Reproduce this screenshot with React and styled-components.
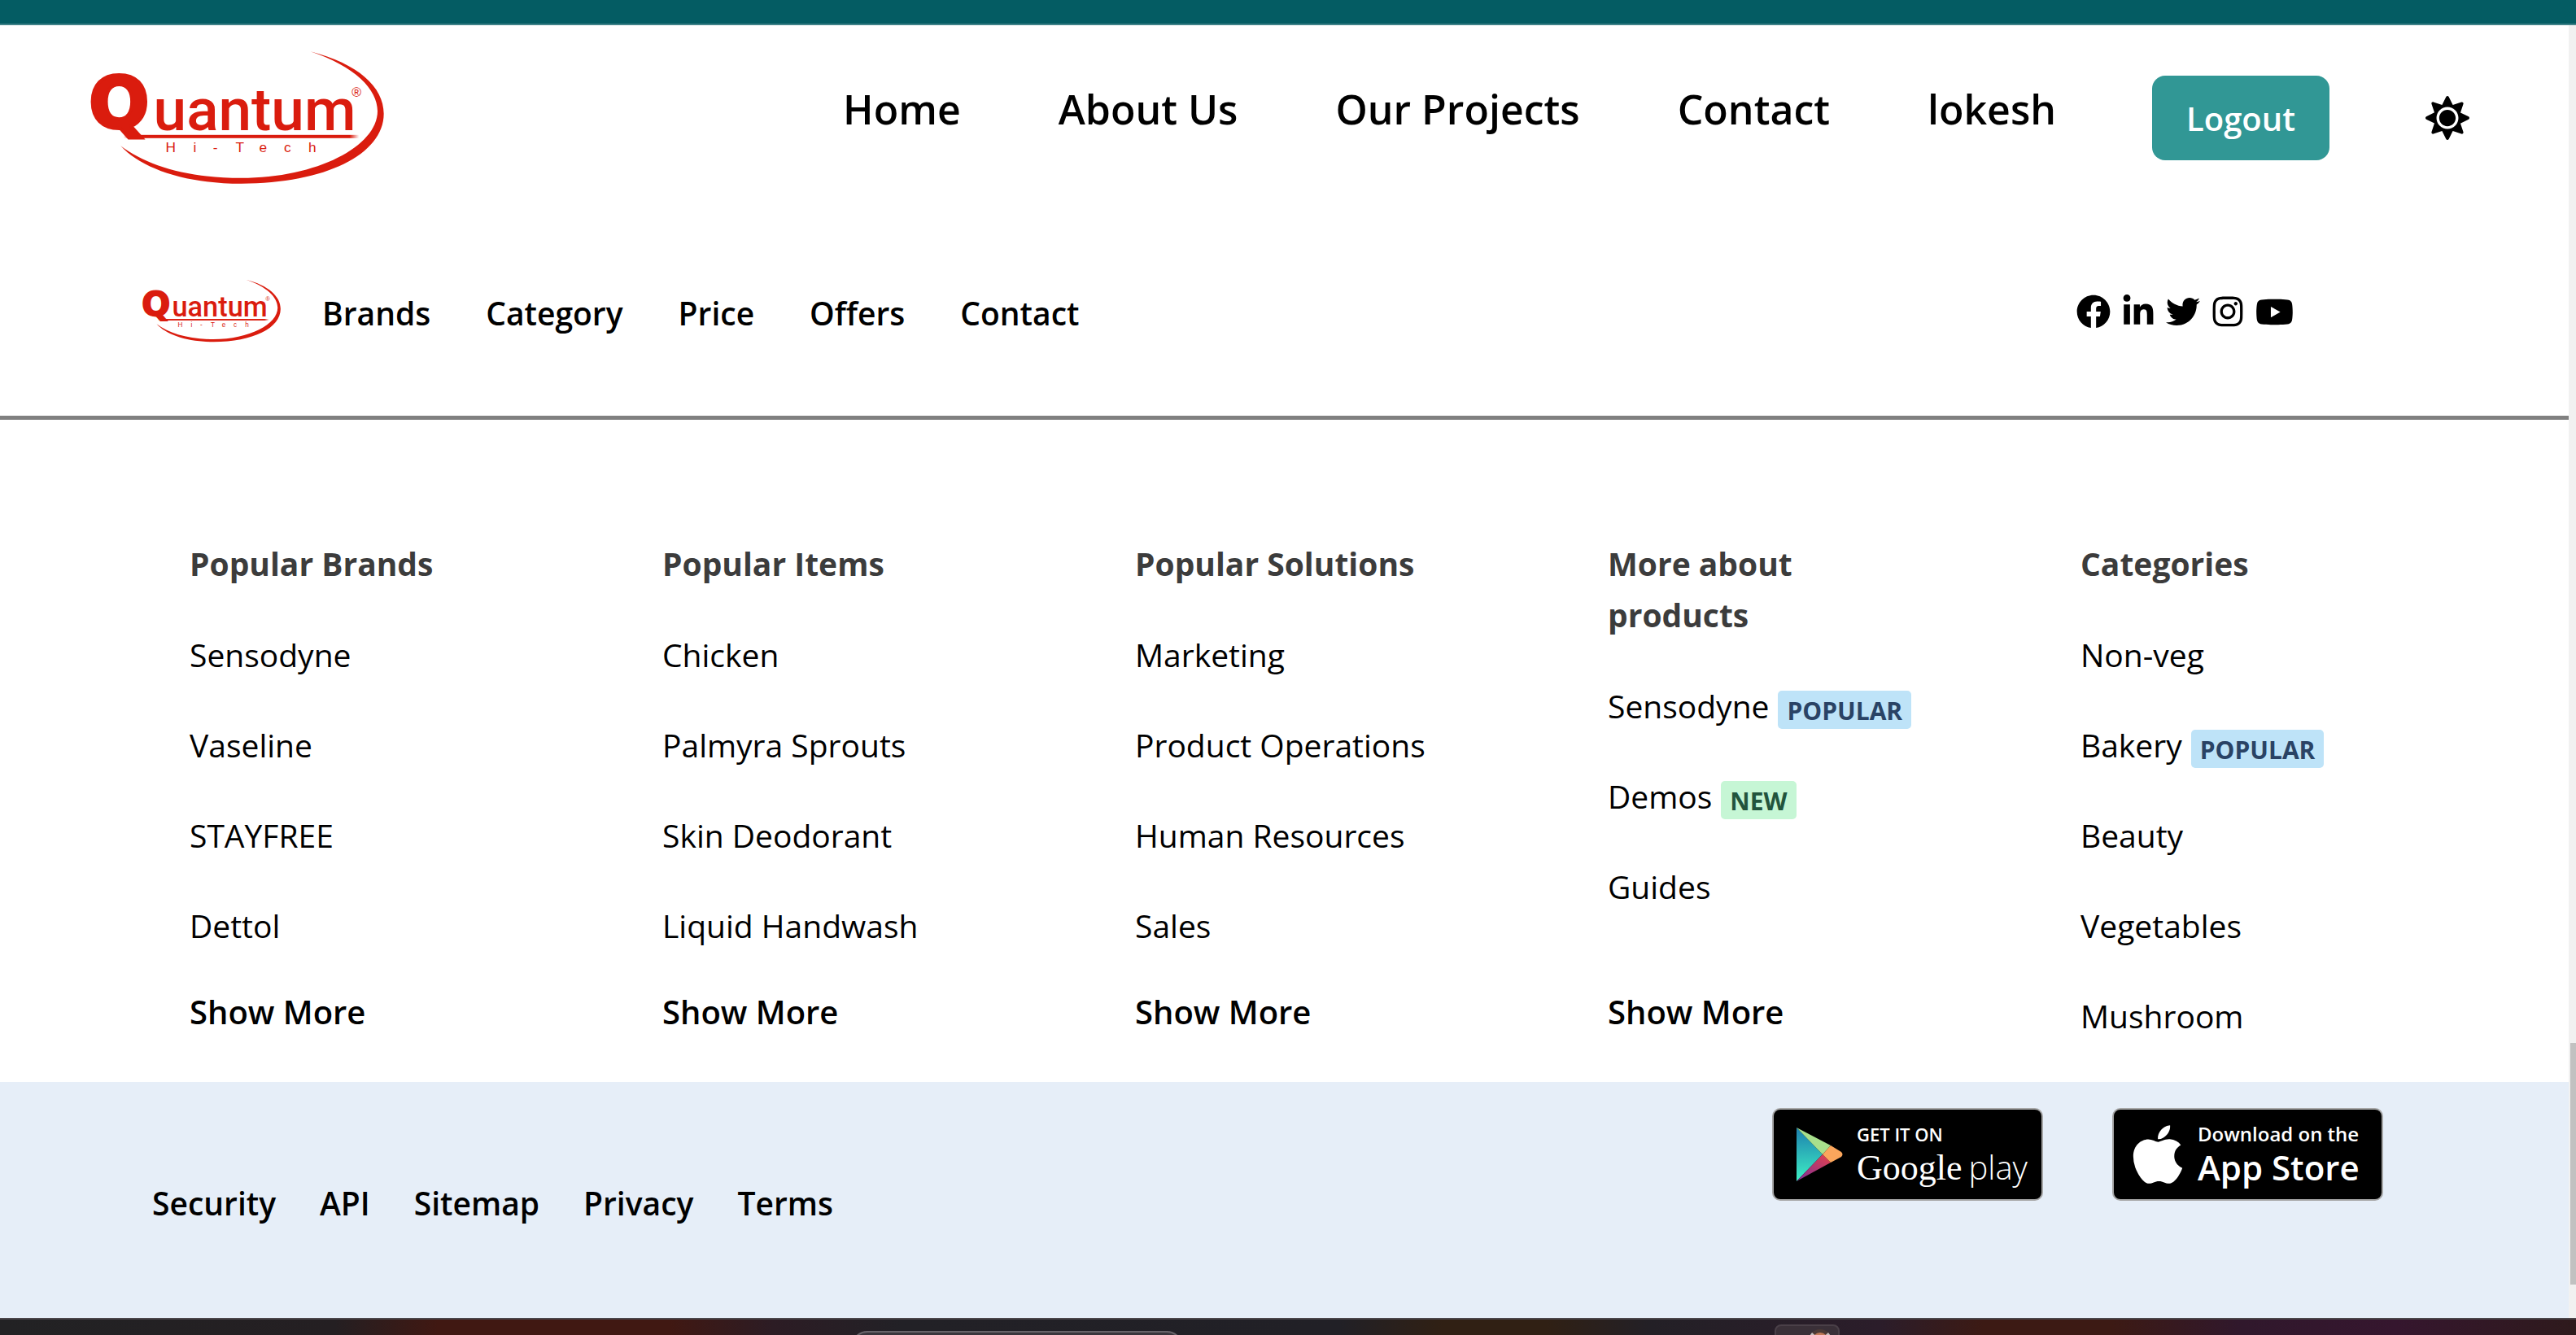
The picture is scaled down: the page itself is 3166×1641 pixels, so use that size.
import React from "react";
import styled, { createGlobalStyle } from "styled-components";
import {
  FaApple,
  FaFacebook,
  FaInstagram,
  FaLinkedinIn,
  FaSun,
  FaTwitter,
  FaYoutube,
} from "react-icons/fa";

const GlobalStyle = createGlobalStyle`
  *, *::before, *::after { box-sizing: border-box; }
  body {
    margin: 0;
    background: #fff;
    color: #000;
    font-family: "Open Sans", "Noto Sans", sans-serif;
    font-size: 39px;
    line-height: 63px;
  }
  ul { list-style: none; margin: 0; padding: 0; }
  a { color: inherit; text-decoration: none; white-space: nowrap; }
  svg { display: block; }
`;

const Page = styled.div`
  min-height: 100vh;
  display: flex;
  flex-direction: column;
`;

const TitleStrip = styled.div`
  height: 31px;
  background: #045c63;
  border-bottom: 2px solid #3e8187;
`;

const Viewport = styled.div`
  flex: 1;
  display: flex;
`;

const Content = styled.div`
  flex: 1;
  min-width: 0;
  display: flex;
  flex-direction: column;
`;

const ScrollTrack = styled.div`
  width: 9px;
  padding-left: 2px;
  background: #f1f1f1;
  display: grid;
  grid-template-rows: 1251fr 297fr 41fr;
`;

const ScrollThumb = styled.div`
  grid-row: 2;
  background: #c1c1c1;
`;

const Header = styled.header`
  display: flex;
  align-items: center;
  justify-content: space-between;
  padding: 32px 122px 32px 109px;
`;

const HeaderNav = styled.nav`
  display: flex;
  align-items: center;
  gap: 118px;
`;

const HeaderLinks = styled.ul`
  display: flex;
  gap: 120px;
  padding-bottom: 22px;
  font-size: 50px;
  font-weight: 600;
  line-height: 72px;
`;

const LogoutButton = styled.button`
  height: 104px;
  padding: 2px 42px 0;
  border: 0;
  border-radius: 16px;
  background: #319795;
  color: #fff;
  font: inherit;
  font-size: 40px;
  font-weight: 600;
`;

const IconButton = styled.button`
  padding: 0;
  border: 0;
  background: none;
  color: #000;
  font-size: 54px;
`;

const SubHeader = styled.div`
  display: flex;
  align-items: center;
  padding: 85px 338px 90px 174px;
  border-bottom: 5px solid #808080;
`;

const SubNav = styled.ul`
  display: flex;
  gap: 68px;
  margin-left: 51px;
  padding-top: 4px;
  font-weight: 600;
`;

const SocialLinks = styled.ul`
  display: flex;
  align-items: center;
  gap: 13px;
  margin-left: auto;
  padding-top: 2px;
`;

const SocialItem = styled.li`
  font-size: ${(p) => (p.$wide ? "47px" : "42px")};
`;

const Columns = styled.section`
  display: grid;
  grid-template-columns: repeat(5, minmax(0, 1fr));
  gap: 210px;
  padding: 145px 229px 50px 233px;
`;

const Column = styled.div`
  display: flex;
  flex-direction: column;
`;

const ColumnTitle = styled.h2`
  margin: 0 0 49px;
  font-size: 39px;
  line-height: 63px;
  font-weight: 700;
  color: #3c3c3c;
`;

const ColumnList = styled.ul`
  display: flex;
  flex-direction: column;
  gap: 48px;
`;

const ColumnItem = styled.li`
  display: flex;
  align-items: center;
  gap: 11px;
  height: 63px;
`;

const Badge = styled.span`
  height: 47px;
  margin-top: 10px;
  padding: 0 11px;
  border-radius: 5px;
  font-size: 30px;
  line-height: 49px;
  font-weight: 700;
  background: ${(p) => (p.$tone === "green" ? "#c6f6d5" : "#bee3f8")};
  color: ${(p) => (p.$tone === "green" ? "#22543d" : "#2a4365")};
`;

const ShowMore = styled.a`
  margin-top: auto;
  padding-bottom: 5px;
  font-size: 40px;
  font-weight: 600;
`;

const Footer = styled.footer`
  flex: 1;
  display: flex;
  align-items: flex-start;
  justify-content: space-between;
  padding: 32px 228px 32px 187px;
  background: #e6eef8;
`;

const FooterLinks = styled.ul`
  display: flex;
  gap: 54px;
  padding-top: 85px;
  font-weight: 600;
`;

const Stores = styled.div`
  display: flex;
  gap: 85px;
`;

const StoreBadge = styled.a`
  display: flex;
  align-items: center;
  width: 333px;
  height: 114px;
  padding-left: ${(p) => p.$inset}px;
  gap: ${(p) => p.$gap}px;
  border: 2px solid #a6a6a6;
  border-radius: 10px;
  background: #000;
  color: #fff;
`;

const StoreText = styled.span`
  display: flex;
  flex-direction: column;
`;

const StoreCaption = styled.span`
  font-size: ${(p) => p.$size}px;
  line-height: 32px;
  font-weight: 600;
`;

const StoreName = styled.span`
  font-size: 42px;
  line-height: 50px;
  font-weight: 600;
`;

const PlayName = styled.span`
  display: flex;
  align-items: baseline;
  gap: 8px;
  line-height: 50px;
  font-size: 44px;
  font-family: "Liberation Serif", serif;
`;

const PlayWord = styled.span`
  font-family: "Open Sans", sans-serif;
  font-size: 40px;
  font-weight: 300;
`;

const Taskbar = styled.div`
  height: 21px;
  overflow: hidden;
  display: grid;
  grid-template-columns: 1046fr 408fr 727fr 80fr 905fr;
  border-top: 2px solid #4b464b;
  background: linear-gradient(
    90deg,
    #222224 0%, #241f22 13%, #401812 17%, #401812 26%, #2c1c24 30%,
    #222126 35%, #212026 52%, #302014 56%, #302014 60%, #232026 64%,
    #2b1d2a 73%, #3c1a14 77%, #3c1a14 82%, #30182c 87%, #35162e 93%, #2e1a1c 100%
  );
`;

const TaskSearch = styled.div`
  grid-column: 2;
  height: 40px;
  margin-top: 14px;
  border: 2px solid #68646a;
  border-radius: 20px;
  background: #39363c;
`;

const TaskTile = styled.div`
  grid-column: 4;
  height: 60px;
  margin-top: 6px;
  padding: 4px 8px 0 0;
  border: 2px solid #4a4048;
  border-radius: 8px;
  background: #3a3038;
`;

const TaskAvatar = styled.div`
  width: 28px;
  height: 28px;
  margin-left: auto;
  border: 4px solid #c9c2c2;
  border-top-color: #4c3a36;
  border-radius: 50%;
  background: #c07a58;
`;

const RED = "#da1c0e";

function QuantumLogo({ width, height, id }) {
  return (
    <svg width={width} height={height} viewBox="87 190 1090 488" role="img" aria-label="Quantum Hi-Tech">
      <defs>
        <linearGradient id={id}>
          <stop offset="0" stopColor={RED} stopOpacity="0" />
          <stop offset="0.04" stopColor={RED} />
          <stop offset="0.96" stopColor={RED} />
          <stop offset="1" stopColor={RED} stopOpacity="0" />
        </linearGradient>
      </defs>
      <path
        fill={RED}
        d="M905 190C1080 235 1176 320 1176 420C1176 570 960 678 650 678C440 678 280 620 205 538C300 610 450 657 650 657C930 657 1153 540 1153 410C1153 330 1070 245 905 190Z"
      />
      <rect x="215" y="498" width="870" height="12" fill={`url(#${id})`} />
      <g fill={RED}>
        <text x="88" y="471" fontFamily="DejaVu Sans" fontWeight="700" fontSize="262" stroke={RED} strokeWidth="12">Q</text>
        <text x="326" y="480" fontFamily="Roboto" fontWeight="500" fontSize="219">uantum</text>
        <text x="1058" y="357" fontFamily="Liberation Sans" fontSize="48">®</text>
        <text x="371 473 546 629 716 808 898" y="562" fontFamily="Liberation Sans" fontSize="52">Hi-Tech</text>
      </g>
    </svg>
  );
}

function PlayIcon() {
  return (
    <svg width="58" height="66" viewBox="0 0 58 66" aria-hidden="true">
      <defs>
        <linearGradient id="playBlue" x1="0" y1="0" x2="0" y2="1">
          <stop offset="0" stopColor="#1c7fae" />
          <stop offset="1" stopColor="#3ff0c4" />
        </linearGradient>
        <linearGradient id="playRed" x1="1" y1="0" x2="0" y2="1">
          <stop offset="0" stopColor="#e5404c" />
          <stop offset="1" stopColor="#7a2f9a" />
        </linearGradient>
      </defs>
      <path d="M1 0L33 33L1 66Z" fill="url(#playBlue)" />
      <path d="M1 0L43 22L33 33Z" fill="#a8e08c" />
      <path d="M1 66L43 43L33 33Z" fill="url(#playRed)" />
      <path d="M43 22L56 30Q59 33 56 36L43 43L33 33Z" fill="#fba65c" />
    </svg>
  );
}

const headerLinks = ["Home", "About Us", "Our Projects", "Contact", "lokesh"];
const subLinks = ["Brands", "Category", "Price", "Offers", "Contact"];
const footerLinks = ["Security", "API", "Sitemap", "Privacy", "Terms"];

const socials = [
  { name: "Facebook", Icon: FaFacebook },
  { name: "LinkedIn", Icon: FaLinkedinIn },
  { name: "Twitter", Icon: FaTwitter },
  { name: "Instagram", Icon: FaInstagram },
  { name: "YouTube", Icon: FaYoutube, wide: true },
];

const columns = [
  {
    title: "Popular Brands",
    more: true,
    items: [{ label: "Sensodyne" }, { label: "Vaseline" }, { label: "STAYFREE" }, { label: "Dettol" }],
  },
  {
    title: "Popular Items",
    more: true,
    items: [{ label: "Chicken" }, { label: "Palmyra Sprouts" }, { label: "Skin Deodorant" }, { label: "Liquid Handwash" }],
  },
  {
    title: "Popular Solutions",
    more: true,
    items: [{ label: "Marketing" }, { label: "Product Operations" }, { label: "Human Resources" }, { label: "Sales" }],
  },
  {
    title: "More about products",
    more: true,
    items: [
      { label: "Sensodyne", badge: "POPULAR", tone: "blue" },
      { label: "Demos", badge: "NEW", tone: "green" },
      { label: "Guides" },
    ],
  },
  {
    title: "Categories",
    items: [
      { label: "Non-veg" },
      { label: "Bakery", badge: "POPULAR", tone: "blue" },
      { label: "Beauty" },
      { label: "Vegetables" },
      { label: "Mushroom" },
    ],
  },
];

function LinkItems({ labels }) {
  return labels.map((label) => (
    <li key={label}>
      <a href="#">{label}</a>
    </li>
  ));
}

export default function App() {
  return (
    <Page>
      <GlobalStyle />
      <TitleStrip />
      <Viewport>
        <Content>
          <Header>
            <a href="#">
              <QuantumLogo width={363} height={163} id="ruleLarge" />
            </a>
            <HeaderNav>
              <HeaderLinks>
                <LinkItems labels={headerLinks} />
              </HeaderLinks>
              <LogoutButton type="button">Logout</LogoutButton>
              <IconButton type="button" aria-label="Toggle color mode">
                <FaSun />
              </IconButton>
            </HeaderNav>
          </Header>

          <SubHeader>
            <a href="#">
              <QuantumLogo width={171} height={78} id="ruleSmall" />
            </a>
            <SubNav>
              <LinkItems labels={subLinks} />
            </SubNav>
            <SocialLinks>
              {socials.map(({ name, Icon, wide }) => (
                <SocialItem key={name} $wide={wide}>
                  <a href="#" aria-label={name}>
                    <Icon />
                  </a>
                </SocialItem>
              ))}
            </SocialLinks>
          </SubHeader>

          <Columns>
            {columns.map((column) => (
              <Column key={column.title}>
                <ColumnTitle>{column.title}</ColumnTitle>
                <ColumnList>
                  {column.items.map((item) => (
                    <ColumnItem key={item.label}>
                      <a href="#">{item.label}</a>
                      {item.badge && <Badge $tone={item.tone}>{item.badge}</Badge>}
                    </ColumnItem>
                  ))}
                </ColumnList>
                {column.more && <ShowMore href="#">Show More</ShowMore>}
              </Column>
            ))}
          </Columns>

          <Footer>
            <FooterLinks>
              <LinkItems labels={footerLinks} />
            </FooterLinks>
            <Stores>
              <StoreBadge href="#" $inset={27} $gap={17}>
                <PlayIcon />
                <StoreText>
                  <StoreCaption $size={22}>GET IT ON</StoreCaption>
                  <PlayName>
                    Google <PlayWord>play</PlayWord>
                  </PlayName>
                </StoreText>
              </StoreBadge>
              <StoreBadge href="#" $inset={13} $gap={8}>
                <FaApple size={82} />
                <StoreText>
                  <StoreCaption $size={24}>Download on the</StoreCaption>
                  <StoreName>App Store</StoreName>
                </StoreText>
              </StoreBadge>
            </Stores>
          </Footer>
        </Content>
        <ScrollTrack>
          <ScrollThumb />
        </ScrollTrack>
      </Viewport>
      <Taskbar>
        <TaskSearch />
        <TaskTile>
          <TaskAvatar />
        </TaskTile>
      </Taskbar>
    </Page>
  );
}
